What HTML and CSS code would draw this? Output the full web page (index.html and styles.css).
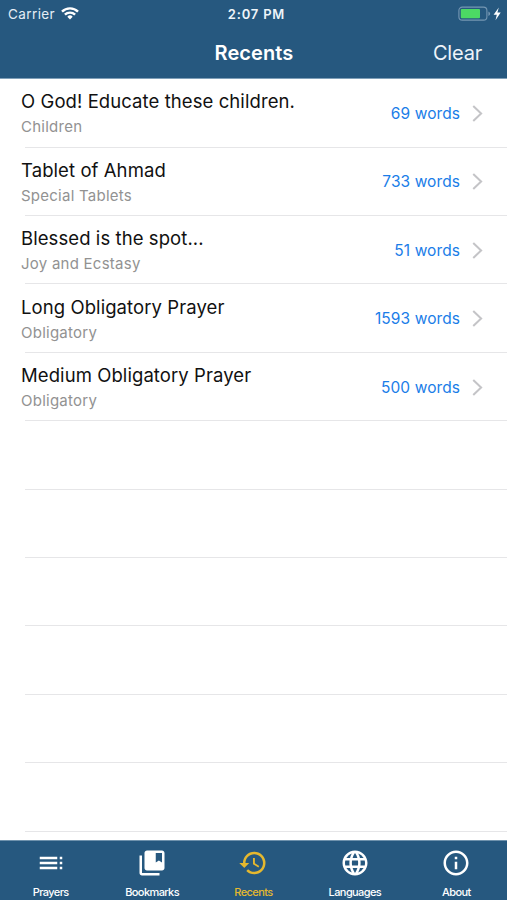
FILE: index.html
```html
<!DOCTYPE html>
<html lang="en">
<head>
<meta charset="utf-8">
<title>Recents</title>
<link rel="stylesheet" href="styles.css">
</head>
<body>
<div class="app">
  <header class="header">
    <div class="status">
      <div class="status-left">
        <span class="carrier">Carrier</span>
        <svg class="wifi" viewBox="0 0 18 13" width="18" height="13" fill="none" stroke="#fff" stroke-width="2.4">
          <path d="M1 4.7a11.3 11.3 0 0 1 16 0M3.9 7.7a7.2 7.2 0 0 1 10.2 0"/>
          <path d="M9 12.4 6.3 9.7a3.8 3.8 0 0 1 5.4 0z" fill="#fff" stroke="none"/>
        </svg>
      </div>
      <span class="time">2:07 PM</span>
      <div class="status-right">
        <svg viewBox="0 0 44 16" width="44" height="16">
          <rect x=".9" y="1.1" width="28" height="13" rx="3.4" fill="none" stroke="#7597b3" stroke-width="1.1"/>
          <rect x="2.8" y="3" width="19.2" height="9.2" rx="1" fill="#4cd964"/>
          <path d="M30.4 5.4q1.8.8 1.8 2.3t-1.8 2.3z" fill="#7597b3"/>
          <path d="M40.8 1.6 35.6 8.8h3.2l-1.3 5.4 5.2-7.6h-3.3z" fill="#fff"/>
        </svg>
      </div>
    </div>
    <div class="nav">
      <h1 class="nav-title">Recents</h1>
      <span class="clear">Clear</span>
    </div>
  </header>
  <main class="list">
    <div class="row"><div class="text"><div class="title">O God! Educate these children.</div><div class="sub">Children</div></div><span class="words">69 words</span><svg class="chev" viewBox="0 0 10 16"><path d="M1 1l7.4 7L1 15"/></svg></div>
    <div class="row"><div class="text"><div class="title">Tablet of Ahmad</div><div class="sub">Special Tablets</div></div><span class="words">733 words</span><svg class="chev" viewBox="0 0 10 16"><path d="M1 1l7.4 7L1 15"/></svg></div>
    <div class="row"><div class="text"><div class="title">Blessed is the spot...</div><div class="sub">Joy and Ecstasy</div></div><span class="words">51 words</span><svg class="chev" viewBox="0 0 10 16"><path d="M1 1l7.4 7L1 15"/></svg></div>
    <div class="row"><div class="text"><div class="title">Long Obligatory Prayer</div><div class="sub">Obligatory</div></div><span class="words">1593 words</span><svg class="chev" viewBox="0 0 10 16"><path d="M1 1l7.4 7L1 15"/></svg></div>
    <div class="row"><div class="text"><div class="title">Medium Obligatory Prayer</div><div class="sub">Obligatory</div></div><span class="words">500 words</span><svg class="chev" viewBox="0 0 10 16"><path d="M1 1l7.4 7L1 15"/></svg></div>
    <div class="row"></div>
    <div class="row"></div>
    <div class="row"></div>
    <div class="row"></div>
    <div class="row"></div>
    <div class="row"></div>
  </main>
  <nav class="tabs">
    <div class="tab"><svg viewBox="0 0 24 24"><path d="M3 9h14V7H3v2zm0 4h14v-2H3v2zm0 4h14v-2H3v2zm16 0h2v-2h-2v2zm0-10v2h2V7h-2zm0 6h2v-2h-2v2z"/></svg><span>Prayers</span></div>
    <div class="tab"><svg viewBox="0 0 24 24"><path d="M4 6H2v14c0 1.1.9 2 2 2h14v-2H4V6z"/><path d="M20 2H8c-1.1 0-2 .9-2 2v12c0 1.1.9 2 2 2h12c1.1 0 2-.9 2-2V4c0-1.1-.9-2-2-2zm0 9.500l-2.500-1.500-2.500 1.500V4h5z"/></svg><span>Bookmarks</span></div>
    <div class="tab active"><svg viewBox="0 0 24 24"><path d="M13 3a9 9 0 0 0-9 9H1l3.890 3.890.07.14L9 12H6c0-3.870 3.130-7 7-7s7 3.130 7 7-3.130 7-7 7c-1.930 0-3.680-.79-4.940-2.060l-1.420 1.420A8.954 8.954 0 0 0 13 21a9 9 0 0 0 0-18zm-1 5v5l4.280 2.540.72-1.210-3.500-2.080V8H12z"/></svg><span>Recents</span></div>
    <div class="tab"><svg viewBox="0 0 24 24"><path d="M11.990 2C6.470 2 2 6.480 2 12s4.470 10 9.990 10C17.520 22 22 17.520 22 12S17.520 2 11.990 2zm6.930 6h-2.950a15.650 15.650 0 0 0-1.380-3.560A8.030 8.030 0 0 1 18.920 8zM12 4.040c.83 1.200 1.480 2.530 1.910 3.960h-3.820c.43-1.430 1.080-2.760 1.910-3.960zM4.260 14C4.100 13.360 4 12.690 4 12s.1-1.360.26-2h3.380c-.08.66-.14 1.320-.14 2s.06 1.340.14 2H4.260zm.82 2h2.950c.32 1.250.78 2.450 1.380 3.560A7.987 7.987 0 0 1 5.080 16zm2.950-8H5.080a7.987 7.987 0 0 1 4.330-3.560A15.650 15.650 0 0 0 8.030 8zM12 19.960c-.83-1.200-1.480-2.530-1.910-3.960h3.820c-.43 1.430-1.080 2.760-1.910 3.960zM14.340 14H9.660c-.09-.66-.16-1.320-.16-2s.07-1.350.16-2h4.680c.09.65.16 1.320.16 2s-.07 1.340-.16 2zm.25 5.560c.6-1.110 1.060-2.310 1.380-3.560h2.950a8.030 8.030 0 0 1-4.330 3.560zM16.360 14c.08-.66.14-1.320.14-2s-.06-1.340-.14-2h3.380c.16.64.26 1.310.26 2s-.1 1.360-.26 2h-3.380z"/></svg><span>Languages</span></div>
    <div class="tab"><svg viewBox="0 0 24 24"><path d="M11 17h2v-6h-2v6zm1-15C6.480 2 2 6.480 2 12s4.480 10 10 10 10-4.480 10-10S17.520 2 12 2zm0 18c-4.410 0-8-3.590-8-8s3.590-8 8-8 8 3.590 8 8-3.590 8-8 8zM11 9h2V7h-2v2z"/></svg><span>About</span></div>
  </nav>
</div>
</body>
</html>
```
FILE: styles.css
```css
* { box-sizing: border-box; }
body { margin: 0; background: #fff; font-family: Inter, "Liberation Sans", sans-serif; }
.app { width: 507px; height: 900px; display: flex; flex-direction: column; overflow: hidden; }
.header { flex: none; height: 79.3px; background: #26587f; color: #fff; border-bottom: 1px solid #7f9fb8; }
.status { height: 27px; display: grid; grid-template-columns: 1fr auto 1fr; align-items: center; padding: 0 5px 0 8px; }
.status-left { display: flex; align-items: center; gap: 6px; }
.carrier { font-size: 13.5px; letter-spacing: 0.4px; color: #e4edf5; }
.wifi { display: block; }
.time { padding-left: 3px; font-size: 13px; font-weight: 600; letter-spacing: 0.8px; color: #eef4f9; }
.status-right { display: flex; justify-content: flex-end; }
.status-right svg { display: block; }
.nav { height: 51px; display: grid; grid-template-columns: 1fr auto 1fr; align-items: center; padding-right: 25px; padding-left: 26px; }
.nav-title { grid-column: 2; margin: 0; font-size: 20px; font-weight: 600; line-height: 24px; letter-spacing: 0.1px; }
.clear { justify-self: end; font-size: 20px; line-height: 24px; letter-spacing: -0.2px; color: #eef4fa; }
.list { flex: 1; min-height: 0; overflow: hidden; }
.row { height: 68.4px; display: flex; align-items: center; padding: 0 24px 0 21px; background: linear-gradient(#e6e6e8, #e6e6e8) 25px 100% / 100% 1px no-repeat; }
.text { flex: 1; padding-top: 1px; }
.title { font-size: 18.5px; line-height: 24px; letter-spacing: 0.08px; color: #111; white-space: nowrap; }
.sub { margin-top: 3px; font-size: 15px; line-height: 22px; letter-spacing: 0.25px; color: #929292; }
.words { font-size: 15.5px; letter-spacing: 0.08px; color: #1a7de8; margin-right: 12px; }
.chev { width: 11px; height: 17px; fill: none; stroke: #c4c4c7; stroke-width: 1.9; }
.tabs { flex: none; height: 60px; background: #26587f; border-top: 1px solid #6f92ad; display: grid; grid-template-columns: repeat(5, 1fr); color: #fff; }
.tab { display: flex; flex-direction: column; align-items: center; padding-top: 7px; font-size: 11px; font-weight: 500; letter-spacing: -0.6px; line-height: 14px; }
.tab svg { width: 30px; height: 30px; fill: currentColor; margin-bottom: 7px; }
.active { color: #e5b82f; }
```
